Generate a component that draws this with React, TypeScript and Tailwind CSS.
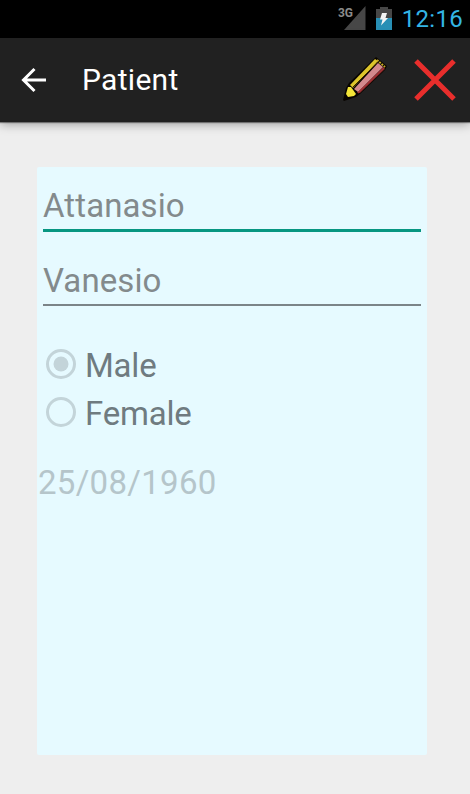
interface FieldProps {
  value: string;
  active?: boolean;
}

interface RadioOptionProps {
  label: string;
  checked?: boolean;
}

function StatusBar() {
  return (
    <div className="flex h-[38px] items-center justify-end bg-black pr-[7px]">
      <svg width="29" height="26" viewBox="0 0 29 26" className="mr-[9px]">
        <path d="M27.500 0v24H6z" fill="#474747" />
        <text x="0" y="11" fontSize="12" fontWeight="700" fill="#8b8b8b" textLength="15" fontFamily="Roboto, sans-serif">
          3G
        </text>
      </svg>
      <svg width="16" height="24" viewBox="0 0 16 24" className="mr-[10px]">
        <path d="M4 0h8v2h4v10H0V2h4z" fill="#474747" />
        <path d="M0 11h16v12H0z" fill="#288fb5" />
        <path d="M6 6h5l-1.500 5H12L5 18.500l1.500-6H4z" fill="#f4f4f4" />
      </svg>
      <span className="text-2xl tracking-[0.3px] text-[#33b5e5]">12:16</span>
    </div>
  );
}

function PencilIcon() {
  return (
    <svg width="46" height="46" viewBox="0 0 46 46">
      <path d="M1 43l3-12 3-5L34 0l11 9-2 4-25 24-4 3-12 4z" fill="#080400" />
      <path d="M8 28L33 2l3 2-25 27z" fill="#dcc52c" />
      <path d="M15 36L41 10l2 2-25 24z" fill="#742524" />
      <path d="M12 32L36 6l5 4-25 25z" fill="#d3898d" />
      <path d="M16 36L42 11" stroke="#a53237" strokeWidth="1.500" />
      <path d="M10.500 30.500L36 5" stroke="#3a2200" strokeWidth="1" />
      <path d="M35 3l8 7" stroke="#c5a923" strokeWidth="2" strokeDasharray="2 1" />
      <path d="M6 30l3 0 5 7-2 2-6 1-2-3z" fill="#f3e437" />
    </svg>
  );
}

function ActionBar() {
  return (
    <header className="flex h-[84px] items-center bg-[#212121] shadow-[0_1px_1px_rgba(0,0,0,0.4),0_2px_10px_rgba(0,0,0,0.35)]">
      <button className="ml-[21px]" aria-label="Back">
        <svg width="26" height="26" viewBox="0 0 26 26" fill="none" stroke="#fff" strokeWidth="3">
          <path d="M25 13H3M13.500 2L2.500 13l11 11" />
        </svg>
      </button>
      <h1 className="ml-[35px] text-[30px] leading-9 tracking-[0.3px] text-white">Patient</h1>
      <div className="ml-auto flex items-center gap-[26px] pr-[14px]">
        <button aria-label="Edit patient">
          <PencilIcon />
        </button>
        <button aria-label="Delete patient">
          <svg width="42" height="42" viewBox="0 0 42 42" stroke="#e92e2c" strokeWidth="5">
            <path d="M2 2l38 38M40 2L2 40" />
          </svg>
        </button>
      </div>
    </header>
  );
}

function Field({ value, active }: FieldProps) {
  return (
    <div className={active ? "border-b-3 border-[#079681] pb-[3px]" : "border-b-2 border-[#7b8488] pb-[3px]"}>
      <div className="text-[33px] leading-10 tracking-[0.1px] text-[#838a8c]">{value}</div>
    </div>
  );
}

function RadioOption({ label, checked }: RadioOptionProps) {
  return (
    <div className="flex h-12 items-center">
      <svg width="30" height="30" viewBox="0 0 30 30" className="mr-[9px]">
        <circle cx="15" cy="15" r="13.500" fill="none" stroke="#c3d4d9" strokeWidth="3" />
        {checked && <circle cx="15" cy="15" r="7.500" fill="#c3d4d9" />}
      </svg>
      <span className="pt-[3px] text-[33px] leading-10 tracking-[-0.2px] text-[#6f7b80]">{label}</span>
    </div>
  );
}

export default function App() {
  return (
    <div className="flex h-screen flex-col bg-[#eeeeee] font-[Roboto,sans-serif]">
      <StatusBar />
      <ActionBar />
      <main className="mt-[45px] ml-[37px] h-[588px] w-[390px] rounded-xs bg-[#e6faff] pt-[19px]">
        <div className="flex flex-col gap-[29px] px-[6px]">
          <Field value="Attanasio" active />
          <Field value="Vanesio" />
        </div>
        <div className="mt-[34px] pl-[9px]">
          <RadioOption label="Male" checked />
          <RadioOption label="Female" />
        </div>
        <div className="mt-[27px] pl-px text-[33px] leading-10 tracking-[0.3px] text-[#b5c5ca]">25/08/1960</div>
      </main>
    </div>
  );
}
